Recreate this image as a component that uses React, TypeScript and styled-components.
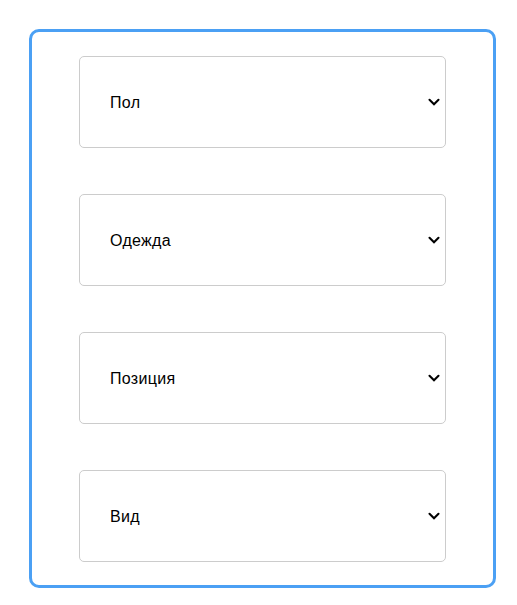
import React from "react";
import styled, { createGlobalStyle } from "styled-components";

const Global = createGlobalStyle`
  html, body { margin: 0; padding: 0; background: #ffffff; }
  body { font-family: "Liberation Sans", Arial, sans-serif; }
`;

const Panel = styled.form`
  box-sizing: border-box;
  width: 467px;
  margin: 29px 0 0 29px;
  padding: 24px 47px 23px;
  border: 3px solid #4ba0f4;
  border-radius: 10px;
  display: flex;
  flex-direction: column;
  gap: 46px;
`;

const Field = styled.div`
  position: relative;
  width: 367px;
  height: 92px;
`;

const Select = styled.select`
  appearance: none;
  -webkit-appearance: none;
  box-sizing: border-box;
  display: block;
  width: 100%;
  height: 100%;
  margin: 0;
  padding: 0 24px 0 30px;
  border: 1px solid #cccccc;
  border-radius: 5px;
  background: #ffffff;
  color: #000000;
  font-family: "Liberation Sans", Arial, sans-serif;
  font-size: 16px;
  letter-spacing: 0.3px;
  outline: none;
`;

const Chevron = styled.svg`
  position: absolute;
  right: 5px;
  top: 42px;
  width: 14px;
  height: 8px;
  pointer-events: none;
`;

const fields = [
  { name: "gender", label: "Пол" },
  { name: "clothes", label: "Одежда" },
  { name: "position", label: "Позиция" },
  { name: "view", label: "Вид" },
];

export default function App() {
  return (
    <>
      <Global />
      <Panel>
        {fields.map((f) => (
          <Field key={f.name}>
            <Select name={f.name} defaultValue="">
              <option value="">{f.label}</option>
            </Select>
            <Chevron viewBox="0 0 14 8" aria-hidden="true">
              <path
                d="M2.5 1.8 L7 6.2 L11.5 1.8"
                fill="none"
                stroke="#000"
                strokeWidth="2.1"
                strokeLinecap="round"
                strokeLinejoin="miter"
              />
            </Chevron>
          </Field>
        ))}
      </Panel>
    </>
  );
}
